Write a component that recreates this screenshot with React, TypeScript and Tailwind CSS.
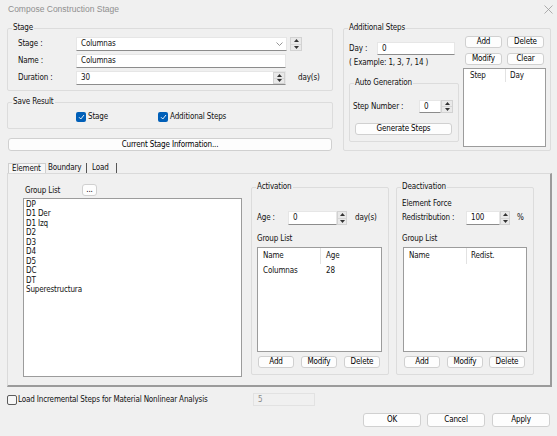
import React from 'react';

const Spin = ({ w = 'w-[11px]' }: { w?: string }) => (
  <div className={`flex flex-col ${w} h-full border border-[#d2d2d2] bg-[#e9e9e9]`}>
    <div className="flex-1 flex items-center justify-center border-b border-[#d6d6d6]">
      <svg width="5" height="3" viewBox="0 0 5 3">
        <path d="M0 3 L2.5 0 L5 3Z" fill="#333" />
      </svg>
    </div>
    <div className="flex-1 flex items-center justify-center">
      <svg width="5" height="3" viewBox="0 0 5 3">
        <path d="M0 0 L2.5 3 L5 0Z" fill="#333" />
      </svg>
    </div>
  </div>
);

const Btn = ({ label, className = '' }: { label: string; className?: string }) => (
  <button
    className={`flex items-center justify-center bg-[#fdfdfd] border border-[#d0d0d0] rounded-[3px] text-[8px] leading-none text-black ${className}`}
  >
    {label}
  </button>
);

const Field = ({ value, className = '' }: { value: string; className?: string }) => (
  <div
    className={`flex items-center bg-white border border-[#e6e6e6] border-b-[#8c8c8c] pl-[4px] ${className}`}
  >
    {value}
  </div>
);

const Check = ({ on }: { on?: boolean }) =>
  on ? (
    <div className="w-[10px] h-[10px] rounded-[2px] bg-[#005fb8] flex items-center justify-center">
      <svg width="7" height="6" viewBox="0 0 7 6">
        <path d="M1 3.2 L2.8 5 L6 1" stroke="white" strokeWidth="0.9" fill="none" />
      </svg>
    </div>
  ) : (
    <div className="w-[10px] h-[10px] rounded-[2px] border border-[#5c5c5c] bg-[#f7f7f7]" />
  );

const Group = ({
  title,
  className = '',
  children,
}: {
  title: string;
  className?: string;
  children: React.ReactNode;
}) => (
  <fieldset className={`border border-[#dcdcdc] rounded-[2px] ${className}`}>
    <legend className="ml-[4px] px-[1px] leading-[10px]">{title}</legend>
    {children}
  </fieldset>
);

const groups = ['DP', 'D1 Der', 'D1 Izq', 'D2', 'D3', 'D4', 'D5', 'DC', 'DT', 'Superestructura'];

const App = () => {
  return (
    <div className="w-[557px] h-[436px] bg-[#f0f0f0] overflow-hidden text-[8px] leading-[10px] tracking-[-0.15px] text-[#111] font-['DejaVu_Sans_Condensed','Roboto',sans-serif]">
      {/* title bar */}
      <div className="h-[18px] flex items-center justify-between pl-[8px] pr-[4px] text-[#8f8f8f] text-[8.5px] tracking-normal font-['Liberation_Sans',Arial,sans-serif]">
        <span>Compose Construction Stage</span>
        <svg width="9" height="9" viewBox="0 0 9 9">
          <path d="M0.5 0.5 L8.5 8.5 M8.5 0.5 L0.5 8.5" stroke="#9a9a9a" strokeWidth="0.8" />
        </svg>
      </div>

      <div className="flex pl-[7px] mt-[5px]">
        {/* left column */}
        <div className="w-[326px] flex flex-col">
          <Group title="Stage" className="h-[68px]">
            <div className="pl-[10px] pt-[4px] flex flex-col gap-[3px]">
              <div className="flex items-center h-[14px]">
                <span className="w-[58px]">Stage :</span>
                <div className="w-[211px] h-full flex items-center justify-between bg-white border border-[#e6e6e6] border-b-[#8c8c8c] pl-[4px] pr-[3px]">
                  <span>Columnas</span>
                  <svg width="7" height="4" viewBox="0 0 7 4">
                    <path d="M0.5 0.5 L3.5 3.5 L6.5 0.5" stroke="#7a7a7a" strokeWidth="0.8" fill="none" />
                  </svg>
                </div>
                <div className="ml-[3px] h-full">
                  <Spin w="w-[12px]" />
                </div>
              </div>
              <div className="flex items-center h-[14px]">
                <span className="w-[58px]">Name :</span>
                <Field value="Columnas" className="w-[210px] h-full" />
              </div>
              <div className="flex items-center h-[14px]">
                <span className="w-[58px]">Duration :</span>
                <div className="w-[210px] h-full flex items-center justify-between bg-white border border-[#e6e6e6] border-b-[#8c8c8c] pl-[4px]">
                  <span>30</span>
                  <Spin w="w-[12px]" />
                </div>
                <span className="ml-[12px]">day(s)</span>
              </div>
            </div>
          </Group>

          <Group title="Save Result" className="h-[32px] mt-[6px]">
            <div className="flex items-center pl-[68px] pt-[5px]">
              <Check on />
              <span className="ml-[2px]">Stage</span>
              <div className="ml-[50px]">
                <Check on />
              </div>
              <span className="ml-[2px]">Additional Steps</span>
            </div>
          </Group>

          <Btn label="Current Stage Information..." className="ml-[1px] mt-[9px] w-[324px] h-[13px]" />
        </div>

        {/* right column */}
        <Group title="Additional Steps" className="ml-[10px] w-[208px] h-[128px]">
          <div className="flex">
            <div className="w-[119px] pl-[5px] flex flex-col">
              <div className="flex items-center h-[13px] mt-[9px]">
                <span className="w-[28px]">Day :</span>
                <Field value="0" className="w-[78px] h-full" />
              </div>
              <span className="mt-[3px]">( Example: 1, 3, 7, 14 )</span>
              <Group title="Auto Generation" className="w-[110px] h-[64px] mt-[10px]">
                <div className="flex items-center h-[13px] mt-[12px] pl-[3px]">
                  <span className="w-[66px]">Step Number :</span>
                  <Field value="0" className="w-[22px] h-full" />
                  <Spin w="w-[12px]" />
                </div>
                <Btn label="Generate Steps" className="ml-[5px] mt-[10px] w-[97px] h-[12px]" />
              </Group>
            </div>
            <div className="w-[84px] flex flex-col">
              <div className="flex gap-[5px] ml-[2px] mt-[3px]">
                <Btn label="Add" className="w-[37px] h-[12px]" />
                <Btn label="Delete" className="w-[37px] h-[12px]" />
              </div>
              <div className="flex gap-[5px] ml-[2px] mt-[5px]">
                <Btn label="Modify" className="w-[37px] h-[12px]" />
                <Btn label="Clear" className="w-[37px] h-[12px]" />
              </div>
              <div className="mt-[3px] w-[83px] h-[79px] bg-white border border-[#9c9c9c]">
                <div className="flex h-[13px] items-center">
                  <span className="w-[42px] pl-[6px] h-full flex items-center border-r border-[#e2e2e2]">Step</span>
                  <span className="pl-[4px]">Day</span>
                </div>
              </div>
            </div>
          </div>
        </Group>
      </div>

      {/* tabs */}
      <div className="flex ml-[8px] mt-[12px] h-[10px] items-stretch">
        <div className="w-[38px] flex items-center pl-[3px] bg-[#f7f7f7] border-l border-t border-r border-[#cfcfcf]">Element</div>
        <div className="w-[41px] flex items-center pl-[2px] border-r border-[#555]">Boundary</div>
        <div className="w-[30px] flex items-center pl-[5px] border-r border-[#555]">Load</div>
      </div>
      <div className="ml-[7px] w-[545px] h-[214px] border-t border-l border-[#dadada] border-r-2 border-b-2 border-r-[#9b9b9b] border-b-[#9b9b9b] flex pl-[15px]">
        <div className="flex flex-col">
          <div className="flex items-end mt-[9px] h-[13px]">
            <span className="w-[59px] pl-[2px]">Group List</span>
            <Btn label="..." className="w-[15px] h-[12px]" />
          </div>
          <div className="mt-[2px] w-[219px] h-[179px] bg-white border border-[#9c9c9c] pl-[2px] pt-[1px] flex flex-col">
            {groups.map((g) => (
              <span key={g} className="leading-[9.45px]">
                {g}
              </span>
            ))}
          </div>
        </div>

        <Group title="Activation" className="ml-[9px] mt-[8px] w-[138px] h-[193px]">
          <div className="pl-[5px] flex flex-col">
            <div className="flex items-center h-[14px] mt-[19px]">
              <span className="w-[31px]">Age :</span>
              <Field value="0" className="w-[49px] h-full" />
              <Spin w="w-[10px]" />
              <span className="ml-[8px]">day(s)</span>
            </div>
            <span className="mt-[9px]">Group List</span>
            <div className="mt-[3px] w-[125px] h-[105px] bg-white border border-[#9c9c9c] flex flex-col">
              <div className="flex h-[16px] items-center">
                <span className="w-[63px] pl-[5px] h-full flex items-center border-r border-[#e2e2e2]">Name</span>
                <span className="pl-[5px]">Age</span>
              </div>
              <div className="flex h-[14px] items-center">
                <span className="w-[63px] pl-[5px]">Columnas</span>
                <span className="pl-[5px]">28</span>
              </div>
            </div>
            <div className="flex mt-[4px] ml-[1px]">
              <Btn label="Add" className="w-[36px] h-[12px]" />
              <Btn label="Modify" className="ml-[7px] w-[36px] h-[12px]" />
              <Btn label="Delete" className="ml-[7px] w-[36px] h-[12px]" />
            </div>
          </div>
        </Group>

        <Group title="Deactivation" className="ml-[7px] mt-[8px] w-[138px] h-[193px]">
          <div className="pl-[5px] flex flex-col">
            <span className="mt-[7px]">Element Force</span>
            <div className="flex items-center h-[14px] mt-[2px]">
              <span className="w-[64px]">Redistribution :</span>
              <Field value="100" className="w-[34px] h-full" />
              <Spin w="w-[10px]" />
              <span className="ml-[7px]">%</span>
            </div>
            <span className="mt-[9px]">Group List</span>
            <div className="mt-[3px] ml-[1px] w-[124px] h-[105px] bg-white border border-[#9c9c9c] flex flex-col">
              <div className="flex h-[16px] items-center">
                <span className="w-[63px] pl-[5px] h-full flex items-center border-r border-[#e2e2e2]">Name</span>
                <span className="pl-[4px]">Redist.</span>
              </div>
            </div>
            <div className="flex mt-[4px] ml-[2px]">
              <Btn label="Add" className="w-[36px] h-[12px]" />
              <Btn label="Modify" className="ml-[7px] w-[36px] h-[12px]" />
              <Btn label="Delete" className="ml-[6px] w-[36px] h-[12px]" />
            </div>
          </div>
        </Group>
      </div>

      {/* bottom */}
      <div className="flex items-center h-[13px] mt-[6px] pl-[7px]">
        <div className="w-[246px] flex items-center">
          <Check />
          <span className="ml-[1px]">Load Incremental Steps for Material Nonlinear Analysis</span>
        </div>
        <div className="w-[62px] h-full flex items-center pl-[4px] border border-[#e2e2e2] text-[#8a8a8a]">5</div>
      </div>
      <div className="flex justify-end pr-[7px] mt-[7px]">
        <Btn label="OK" className="w-[58px] h-[14px]" />
        <Btn label="Cancel" className="ml-[6px] w-[58px] h-[14px]" />
        <Btn label="Apply" className="ml-[7px] w-[58px] h-[14px]" />
      </div>
    </div>
  );
};

export default App;
